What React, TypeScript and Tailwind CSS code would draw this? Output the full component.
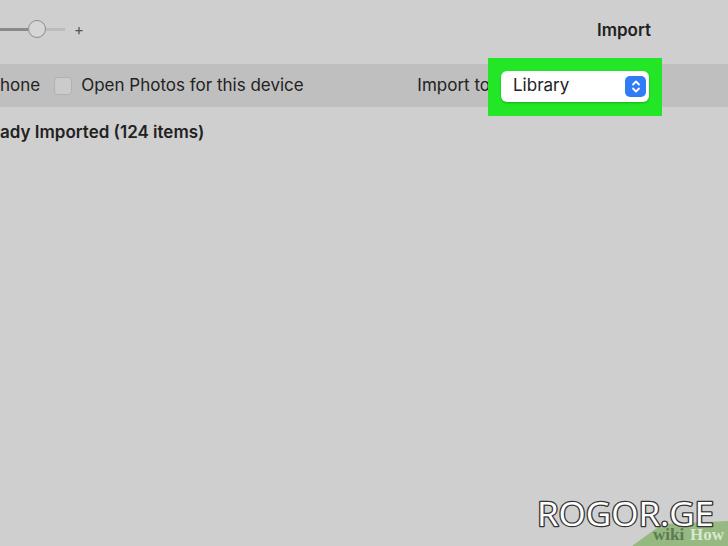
import React from 'react';

const font = { fontFamily: 'Inter, "Noto Sans", sans-serif' };

// the blue up/down chevron button on the right of the popup
const Stepper = () => (
  <div className="flex h-[21px] w-[21px] items-center justify-center rounded-[5px] bg-[#2f7cf6]">
    <svg width="10" height="15" viewBox="0 0 10 15" fill="none" stroke="white" strokeWidth="1.8" strokeLinecap="round" strokeLinejoin="round">
      <path d="M2 5.5 L5 2.5 L8 5.5" />
      <path d="M2 9.5 L5 12.5 L8 9.5" />
    </svg>
  </div>
);

const Slider = () => (
  <div className="flex items-center">
    <div className="h-[3px] w-[28px] bg-[#8a8a8a]" />
    <div className="h-[18px] w-[18px] rounded-full border border-[#8c8c8c] bg-[#d6d6d6]" />
    <div className="h-[3px] w-[19px] bg-[#bcbcbc]" />
    <span className="ml-[9px] text-[15px] leading-none text-[#555]">+</span>
  </div>
);

const Watermark = () => (
  <svg className="absolute bottom-0 right-0" width="200" height="50" viewBox="0 0 200 50">
    <path d="M104 50 L126 34 Q134 28 146 27.5 L200 25 L200 50 Z" fill="#95b981" />
    <text x="125" y="44" fontFamily="'Liberation Serif', serif" fontWeight="bold" fontSize="17" fill="#5d7a52">wiki</text>
    <text x="162" y="44" fontFamily="'Liberation Serif', serif" fontWeight="bold" fontSize="17" fill="#d8e8ce">How</text>
    <text
      x="9"
      y="30"
      textLength="177"
      lengthAdjust="spacingAndGlyphs"
      fontFamily="'Open Sans', Lato, sans-serif"
      fontSize="32"
      fill="white"
      stroke="#333"
      strokeWidth="2.5"
      paintOrder="stroke"
      strokeLinejoin="round"
    >
      ROGOR.GE
    </text>
  </svg>
);

export default function App() {
  return (
    <div className="relative h-[546px] w-[728px] overflow-hidden bg-[#cfcfcf] text-[#222]" style={font}>
      {/* toolbar */}
      <div className="flex h-[64px] items-center justify-between pr-[77px] pb-[6px]">
        <Slider />
        <span className="mt-[4px] text-[17px] font-semibold">Import</span>
      </div>

      {/* options band */}
      <div className="flex h-[43px] items-center bg-[#bfbfbf] pt-[1px] text-[17px]">
        <span>hone</span>
        <div className="ml-[14px] h-[18px] w-[18px] rounded-[4px] border border-[#b0b0b0] bg-[#cbcbcb]" />
        <span className="ml-[9px]">Open Photos for this device</span>
        <span className="ml-auto">Import to</span>
        <div className="relative ml-[11px] mr-[79px]">
          <div className="absolute -inset-x-[13px] -top-[13px] -bottom-[14px] bg-[#22e626]" />
          <div className="relative flex h-[31px] w-[148px] items-center justify-between rounded-[6px] bg-white pl-[12px] pr-[3px] shadow-[0_1px_2px_rgba(0,0,0,0.25)]">
            <span>Library</span>
            <Stepper />
          </div>
        </div>
      </div>

      <div className="mt-[13px] text-[17px] font-semibold">ady Imported (124 items)</div>

      <Watermark />
    </div>
  );
}
